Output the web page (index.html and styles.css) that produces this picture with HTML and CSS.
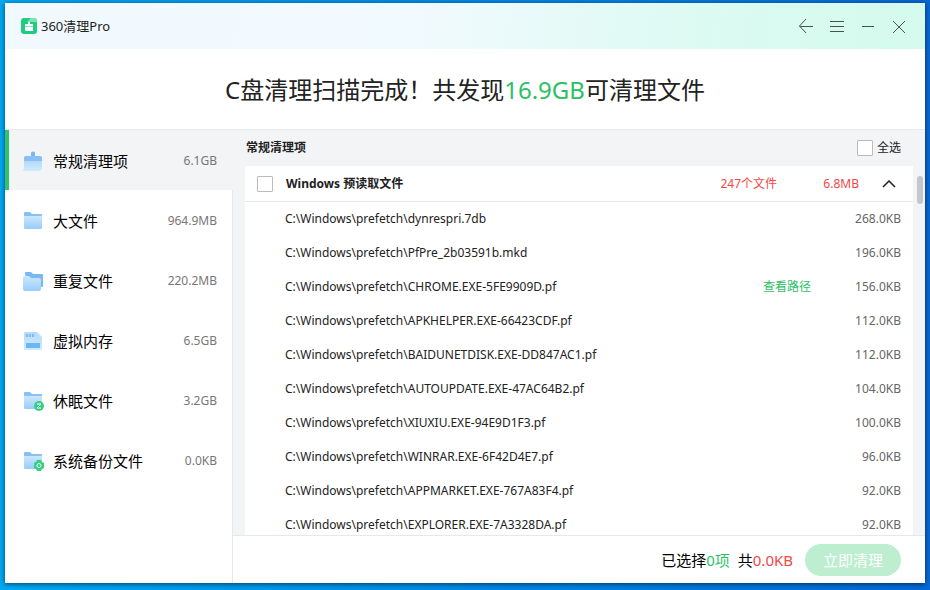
FILE: index.html
```html
<!DOCTYPE html>
<html lang="zh-CN">

<head>
    <meta charset="UTF-8" />
    <meta name="viewport" content="width=device-width, initial-scale=1" />
    <title>360清理Pro</title>
    <link rel="stylesheet" href="styles.css">
</head>

<body>
    <!-- Shared gradients for the sidebar icons -->
    <svg class="defs" width="0" height="0" aria-hidden="true">
        <defs>
            <linearGradient id="front" x1="0" y1="0" x2="0" y2="1">
                <stop offset="0" stop-color="#cde7fd" />
                <stop offset="1" stop-color="#97cdfa" />
            </linearGradient>
            <linearGradient id="pale" x1="0" y1="0" x2="0" y2="1">
                <stop offset="0" stop-color="#b5dafa" />
                <stop offset="1" stop-color="#cfebff" />
            </linearGradient>
        </defs>
    </svg>

    <div class="window">
        <header class="titlebar">
            <div class="brand">
                <svg width="16" height="16" viewBox="0 0 16 16" aria-hidden="true">
                    <rect width="16" height="16" rx="3" fill="#20cc82" />
                    <path d="M6 4 10 0h3a3 3 0 0 1 3 3v1z" fill="#79e6b2" />
                    <path d="M7 4h2v2h3v2H4V6h3zM4 9h8v4H5L4 12z" fill="#fff" />
                    <path d="M4 8h8v1H4z" fill="#8be3bb" />
                </svg>
                <span>360清理Pro</span>
            </div>
            <div class="controls">
                <button type="button" aria-label="返回"><svg viewBox="0 0 16 16"><path d="M8 1 1.500 8 8 15M1.500 8.500H15" /></svg></button>
                <button type="button" aria-label="菜单"><svg viewBox="0 0 16 16"><path d="M1 3.500h14M1 8.500h14M1 13.500h14" /></svg></button>
                <button type="button" aria-label="最小化"><svg viewBox="0 0 16 16"><path d="M2 8.500h12" /></svg></button>
                <button type="button" aria-label="关闭"><svg viewBox="0 0 16 16"><path d="M2 3l12 12M14 3 2 15" /></svg></button>
            </div>
        </header>

        <h1 class="summary">C盘清理扫描完成！共发现<span class="green">16.9GB</span>可清理文件</h1>

        <div class="body">
            <nav class="sidebar">
                <a href="#general" class="item active">
                    <svg viewBox="0 0 22 22">
                        <path d="M9 6V3q0-1.500 2-1.500T13 3v3z" fill="#79b8ef" />
                        <path d="M2 11h18v7q0 3-3 3H0q2-1 2-3z" fill="url(#pale)" />
                        <path d="M4 6h14q2 0 2 2v3H2V8q0-2 2-2z" fill="#86c0f4" />
                    </svg>
                    <span class="name">常规清理项</span><span class="size">6.1GB</span>
                </a>
                <a href="#large" class="item">
                    <svg viewBox="0 0 22 22">
                        <path d="M2 3q0-1 1-1h5l2 2h9q1 0 1 1v5H2z" fill="#86c0f4" />
                        <path d="M2 6h18v12q0 1-1 1H3q-1 0-1-1z" fill="url(#front)" />
                    </svg>
                    <span class="name">大文件</span><span class="size">964.9MB</span>
                </a>
                <a href="#duplicate" class="item">
                    <svg viewBox="0 0 22 22">
                        <path d="M3 3q0-1 1-1h5l2 2h9q1 0 1 1v11q0 1-1 1H5z" fill="#79b9f3" />
                        <path d="M1 7q0-1 1-1h5l2 2h8q2 0 2 2v9q0 2-2 2H3q-2 0-2-2z" fill="url(#front)" />
                    </svg>
                    <span class="name">重复文件</span><span class="size">220.2MB</span>
                </a>
                <a href="#memory" class="item">
                    <svg viewBox="0 0 22 22">
                        <path d="M2 3q0-1 1-1h12l5 5v12q0 1-1 1H3q-1 0-1-1z" fill="url(#pale)" />
                        <path d="M4 4h2v3H4zM7 4h2v3H7zM10 4h2v3h-2z" fill="#7dbbee" />
                        <rect x="4" y="13" width="14" height="5" fill="#6bb7f6" />
                    </svg>
                    <span class="name">虚拟内存</span><span class="size">6.5GB</span>
                </a>
                <a href="#hibernate" class="item">
                    <svg viewBox="0 0 22 22">
                        <path d="M2 3q0-1 1-1h5l2 2h9q1 0 1 1v3H2z" fill="#86c0f4" />
                        <path d="M2 6h18v12q0 1-1 1H3q-1 0-1-1z" fill="url(#front)" />
                        <circle cx="17" cy="16" r="5" fill="#36cf83" />
                        <path d="M15 14h4l-4 4h4" fill="none" stroke="#fff" />
                    </svg>
                    <span class="name">休眠文件</span><span class="size">3.2GB</span>
                </a>
                <a href="#backup" class="item">
                    <svg viewBox="0 0 22 22">
                        <path d="M2 3q0-1 1-1h5l2 2h9q1 0 1 1v3H2z" fill="#86c0f4" />
                        <path d="M2 6h18v12q0 1-1 1H3q-1 0-1-1z" fill="url(#front)" />
                        <path d="M15 10h4l1 2 2 1v5l-2 1-1 2h-4l-1-2-2-1v-5l2-1z" fill="#36cf83" />
                        <circle cx="17" cy="15.500" r="2" fill="none" stroke="#fff" />
                    </svg>
                    <span class="name">系统备份文件</span><span class="size">0.0KB</span>
                </a>
            </nav>

            <main class="main">
                <div class="main-head">
                    <h2>常规清理项</h2>
                    <label class="select-all"><input type="checkbox">全选</label>
                </div>

                <div class="list-area">
                    <section class="card">
                        <div class="group">
                            <input type="checkbox" id="prefetch">
                            <label for="prefetch">Windows 预读取文件</label>
                            <span class="count">247个文件</span>
                            <span class="total">6.8MB</span>
                            <button type="button" aria-label="收起"><svg width="14" height="8" viewBox="0 0 14 8"><path d="M1 7l6-6 6 6" /></svg></button>
                        </div>
                        <ul class="files">
                            <li><span>C:\Windows\prefetch\dynrespri.7db</span><span class="kb">268.0KB</span></li>
                            <li><span>C:\Windows\prefetch\PfPre_2b03591b.mkd</span><span class="kb">196.0KB</span></li>
                            <li><span>C:\Windows\prefetch\CHROME.EXE-5FE9909D.pf</span><a href="#path">查看路径</a><span class="kb">156.0KB</span></li>
                            <li><span>C:\Windows\prefetch\APKHELPER.EXE-66423CDF.pf</span><span class="kb">112.0KB</span></li>
                            <li><span>C:\Windows\prefetch\BAIDUNETDISK.EXE-DD847AC1.pf</span><span class="kb">112.0KB</span></li>
                            <li><span>C:\Windows\prefetch\AUTOUPDATE.EXE-47AC64B2.pf</span><span class="kb">104.0KB</span></li>
                            <li><span>C:\Windows\prefetch\XIUXIU.EXE-94E9D1F3.pf</span><span class="kb">100.0KB</span></li>
                            <li><span>C:\Windows\prefetch\WINRAR.EXE-6F42D4E7.pf</span><span class="kb">96.0KB</span></li>
                            <li><span>C:\Windows\prefetch\APPMARKET.EXE-767A83F4.pf</span><span class="kb">92.0KB</span></li>
                            <li><span>C:\Windows\prefetch\EXPLORER.EXE-7A3328DA.pf</span><span class="kb">92.0KB</span></li>
                        </ul>
                    </section>
                    <div class="scrollbar"><div class="thumb"></div></div>
                </div>

                <footer class="footer">
                    <span>已选择<span class="green">0项</span></span>
                    <span>共<span class="red">0.0KB</span></span>
                    <button type="button" class="clean">立即清理</button>
                </footer>
            </main>
        </div>
    </div>
</body>

</html>
```
FILE: styles.css
```css
* {
    box-sizing: border-box;
}

body {
    margin: 0;
    padding: 3px 5px 7px;
    height: 100vh;
    overflow: hidden;
    font-family: "Noto Sans", "Noto Sans CJK SC", sans-serif;
    font-size: 12px;
    line-height: 20px;
    color: #222;
    background: linear-gradient(90deg, #00a8f3 0%, #0084e4 60%, #0868d6 100%);
}

button {
    margin: 0;
    padding: 0;
    border: 0;
    background: none;
    font: inherit;
    cursor: pointer;
}

a {
    text-decoration: none;
}

h1,
h2,
ul {
    margin: 0;
    padding: 0;
    font-weight: 400;
}

.defs {
    position: absolute;
}

.green {
    color: #2dbf66;
}

.red {
    color: #f04848;
}

.window {
    display: flex;
    flex-direction: column;
    height: 100%;
    background: #fff;
    box-shadow: 0 1px 5px rgba(0, 0, 0, 0.6);
}

/* Title bar */
.titlebar {
    display: flex;
    flex: none;
    justify-content: space-between;
    align-items: center;
    height: 46px;
    padding: 0 16px;
    background: linear-gradient(100deg, #f1f9fe 0%, #f1fafe 45%, #dcfaf2 75%, #d4fbed 100%);
}

.brand {
    display: flex;
    align-items: center;
    gap: 4px;
    font-size: 13px;
}

.controls {
    display: flex;
    gap: 11px;
}

.controls button {
    width: 20px;
    height: 20px;
}

.controls svg {
    display: block;
    width: 16px;
    height: 16px;
    margin: 2px;
    fill: none;
    stroke: #46534f;
}

.summary {
    flex: none;
    height: 81px;
    border-bottom: 1px solid #e6e8ea;
    font-size: 24px;
    line-height: 82px;
    text-align: center;
}

.body {
    display: flex;
    flex: 1;
    min-height: 0;
    background: #f2f4f6;
}

/* Sidebar */
.sidebar {
    flex: none;
    width: 228px;
    border-right: 1px solid #e6e8ea;
    background: #fff;
}

.item {
    display: flex;
    align-items: center;
    height: 60px;
    padding: 2px 15px 0 13px;
    border-left: 4px solid transparent;
    font-size: 15px;
    color: #000;
}

.item.active {
    border-left-color: #33c16c;
    background: #f2f4f6;
    margin-right: -1px;
    padding-right: 16px;
}

.item svg {
    width: 22px;
    height: 22px;
    margin-right: 9px;
}

.item .size {
    margin-left: auto;
    font-size: 12px;
    color: #777;
}

/* Main panel */
.main {
    display: flex;
    flex: 1;
    flex-direction: column;
    min-width: 0;
}

.main-head {
    display: flex;
    flex: none;
    justify-content: space-between;
    align-items: center;
    height: 36px;
    padding: 0 24px 0 13px;
}

.main-head h2 {
    font-size: 12px;
    font-weight: 700;
}

.select-all {
    display: flex;
    align-items: center;
    gap: 4px;
}

input[type="checkbox"] {
    appearance: none;
    width: 16px;
    height: 16px;
    margin: 0;
    border: 1px solid #b9bcc0;
    border-radius: 1px;
    background: #fff;
}

.list-area {
    display: flex;
    flex: 1;
    min-height: 0;
    padding-left: 12px;
    overflow: hidden;
}

.card {
    flex: 1;
    min-width: 0;
    background: #fff;
}

.group {
    display: flex;
    align-items: center;
    height: 36px;
    padding: 0 17px 0 12px;
    border-bottom: 1px solid #e6e8ea;
}

.group label {
    margin: 0 auto 0 13px;
    font-weight: 700;
}

.count,
.total {
    color: #f04848;
}

.total {
    width: 82px;
    text-align: right;
}

.group button {
    margin-left: 23px;
}

.group svg {
    display: block;
    fill: none;
    stroke: #222;
    stroke-width: 1.5;
}

.files {
    list-style: none;
}

.files li {
    display: flex;
    align-items: center;
    height: 34px;
    padding: 0 12px 0 40px;
}

.files a {
    margin-left: auto;
    color: #2dbf66;
}

.kb {
    margin-left: auto;
    color: #666;
}

.files a + .kb {
    width: 90px;
    margin-left: 0;
    text-align: right;
}

.scrollbar {
    width: 12px;
    padding: 10px 2px 0 4px;
}

.thumb {
    height: 28px;
    border-radius: 3px;
    background: #c3c6ca;
}

.footer {
    display: flex;
    flex: none;
    justify-content: flex-end;
    align-items: center;
    gap: 8px;
    height: 48px;
    padding: 0 24px 0 0;
    border-top: 1px solid #e6e8ea;
    background: #fff;
    font-size: 15px;
    color: #000;
}

.clean {
    width: 96px;
    height: 32px;
    margin-left: 4px;
    border-radius: 16px;
    background: #bceecf;
    color: #fff;
}
```
